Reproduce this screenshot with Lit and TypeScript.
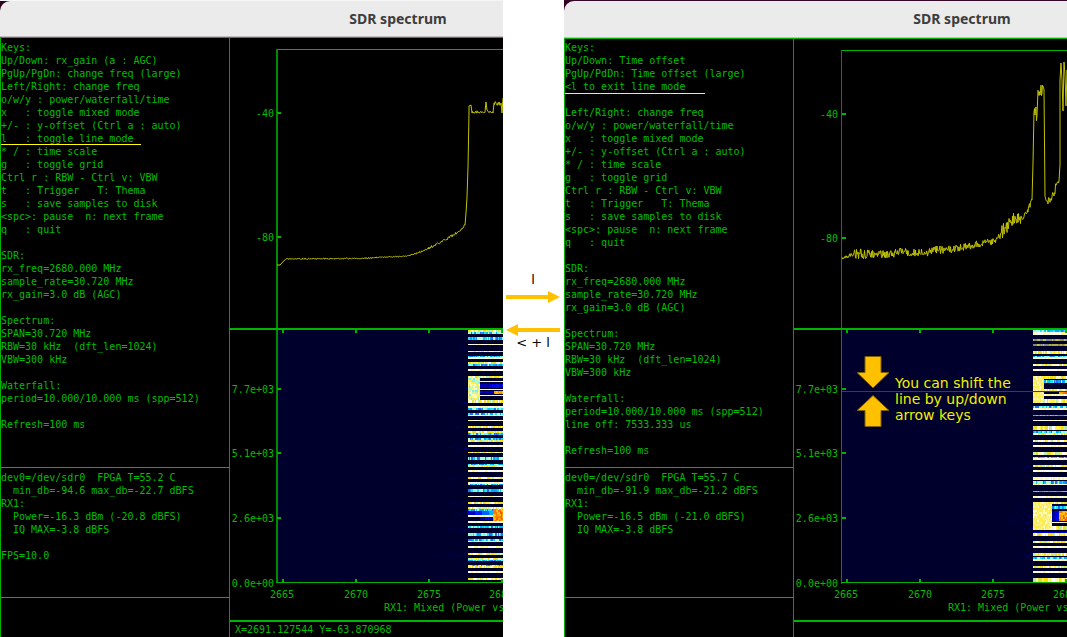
import { LitElement, html, svg, css, nothing } from "lit";
import { classMap } from "lit/directives/class-map.js";

type Tone = "white" | "yellow" | "cyan" | "dull" | "block" | "mixed" | "orange" | "blue" | "fade";
// x start, y, width, height, tone
type Band = [number, number, number, number, Tone];

interface Capture {
  lowered: boolean;
  keys: string[];
  marked: string;
  status: string[];
  cursor: string;
  frameX: number;
  trace: string;
  bands: Band[];
  haze: [number, number][];
  lineMode: boolean;
}

const PALETTE: Record<Tone, string[]> = {
  white: ["#ffffff", "#fff9b0", "#ffffe8", "#f4f4f4", "#fdf68a"],
  yellow: ["#fff04a", "#fff9b0", "#e9dc30", "#ffffff", "#b9f0b0", "#ffe000"],
  cyan: ["#20e0ff", "#00a8ff", "#70ffe8", "#2070ff", "#a8ffd0", "#00d0f0"],
  dull: ["#8c8c50", "#b8a848", "#7c8890", "#c8b850"],
  block: ["#fff37a", "#ffee40", "#fffbc0", "#f4f090", "#ffe850"],
  mixed: ["#fff37a", "#ffee40", "#fffbc0", "#b8f8c0", "#80f0e8", "#f0f080"],
  orange: ["#ffa000", "#ffc000", "#ff7800", "#ffb820", "#f06000"],
  blue: ["#0000c8", "#0010e0", "#0000a0", "#0000e8"],
  fade: ["#0000c0", "#0018ff", "#0060ff", "#00b0ff"],
};

function noise(seed: number) {
  let s = seed;
  return () => {
    s = (s * 1664525 + 1013904223) % 4294967296;
    return s / 4294967296;
  };
}

function paintBand([x, y, w, h, tone]: Band, rand: () => number) {
  const colours = PALETTE[tone];
  const cells = [];
  const tall = tone === "block" || tone === "mixed" || tone === "orange" ? 2 : h;
  for (let cy = 0; cy < h; cy += tall) {
    for (let cx = 0; cx < w; ) {
      const cw = Math.min(w - cx, rand() < 0.5 ? 1 : 2);
      const index =
        tone === "fade"
          ? Math.min(3, Math.floor((cx / w) * 4))
          : Math.floor(rand() * colours.length);
      cells.push(
        svg`<rect x=${x + cx} y=${y + cy} width=${cw} height=${Math.min(tall, h - cy)} fill=${colours[index]} />`
      );
      cx += cw;
    }
  }
  return cells;
}

function roughen(points: [number, number, number][], seed: number): string {
  const rand = noise(seed);
  const out: string[] = [];
  for (let i = 0; i < points.length - 1; i++) {
    const [x0, y0, a0] = points[i];
    const [x1, y1] = points[i + 1];
    const steps = a0 ? Math.max(1, Math.round((x1 - x0) / 0.5)) : 1;
    for (let k = 0; k < steps; k++) {
      const t = k / steps;
      const dy = a0 ? (rand() - 0.5) * 2 * a0 : 0;
      out.push(`${(x0 + (x1 - x0) * t).toFixed(1)},${(y0 + (y1 - y0) * t + dy).toFixed(1)}`);
    }
  }
  const last = points[points.length - 1];
  out.push(`${last[0]},${last[1]}`);
  return out.join(" ");
}

const SIGNAL_WIDTH = 40;

const full = (x: number, rows: [number, number, Tone][]): Band[] =>
  rows.map(([y, h, tone]): Band => [x, y, SIGNAL_WIDTH, h, tone]);

const TAIL_KEYS = [
  "* / : time scale",
  "g   : toggle grid",
  "Ctrl r : RBW - Ctrl v: VBW",
  "t   : Trigger   T: Thema",
  "s   : save samples to disk",
  "<spc>: pause  n: next frame",
  "q   : quit",
  "",
  "SDR:",
  "rx_freq=2680.000 MHz",
  "sample_rate=30.720 MHz",
  "rx_gain=3.0 dB (AGC)",
  "",
  "Spectrum:",
  "SPAN=30.720 MHz",
  "RBW=30 kHz  (dft_len=1024)",
  "VBW=300 kHz",
  "",
  "Waterfall:",
  "period=10.000/10.000 ms (spp=512)",
];

const NORMAL: Capture = {
  lowered: false,
  marked: "l   : toggle line mode",
  keys: [
    "Keys:",
    "Up/Down: rx_gain (a : AGC)",
    "PgUp/PgDn: change freq (large)",
    "Left/Right: change freq",
    "o/w/y : power/waterfall/time",
    "x   : toggle mixed mode",
    "+/- : y-offset (Ctrl a : auto)",
    "l   : toggle line mode",
    ...TAIL_KEYS,
    "",
    "Refresh=100 ms",
  ],
  status: [
    "dev0=/dev/sdr0  FPGA T=55.2 C",
    "  min_db=-94.6 max_db=-22.7 dBFS",
    "RX1:",
    "  Power=-16.3 dBm (-20.8 dBFS)",
    "  IQ MAX=-3.8 dBFS",
    "",
    "FPS=10.0",
  ],
  cursor: "X=2691.127544 Y=-63.870968",
  frameX: 276,
  trace: roughen(
    [
      [277, 265, 0], [280, 265, 0], [286, 259, 0.6], [360, 258.5, 0.6], [378, 257.5, 0.5],
      [407, 256, 0.5], [416, 253.5, 0.8], [427, 249, 1.2], [443, 241, 1.2], [460, 231, 1],
      [465, 225, 0], [466, 213, 0], [467, 197, 0], [468, 167, 0], [469, 113, 0], [469, 106, 0],
      [471, 105, 0], [472, 112, 1.3], [485, 112, 0], [486, 102, 0], [487, 110, 0],
      [489, 112, 1.2], [493, 113, 0], [494, 103, 2.5], [501, 103, 0], [502, 113, 0], [503, 98, 0],
    ],
    11
  ),
  bands: [
    ...full(468, [
      [330, 2, "yellow"], [332, 2, "cyan"], [337, 3, "cyan"], [344, 1, "white"], [351, 1, "yellow"],
      [356, 1, "cyan"], [357, 2, "white"], [362, 2, "yellow"], [364, 2, "cyan"], [369, 2, "white"],
      [376, 2, "yellow"], [381, 1, "white"], [389, 1, "white"], [395, 1, "white"], [400, 3, "yellow"],
      [406, 2, "white"], [408, 2, "cyan"], [413, 2, "cyan"], [415, 1, "white"], [420, 1, "white"],
      [426, 2, "yellow"], [431, 2, "yellow"], [433, 2, "cyan"], [438, 2, "cyan"], [440, 2, "yellow"],
      [445, 2, "white"], [452, 1, "yellow"], [457, 3, "cyan"], [464, 1, "cyan"], [465, 2, "yellow"],
      [470, 2, "white"], [477, 2, "yellow"], [482, 2, "white"], [484, 1, "cyan"], [489, 3, "cyan"],
      [496, 1, "white"], [502, 2, "yellow"], [507, 2, "yellow"], [509, 2, "cyan"], [515, 2, "white"],
      [521, 2, "white"], [526, 2, "cyan"], [533, 3, "cyan"], [539, 2, "cyan"], [541, 1, "yellow"],
      [546, 2, "white"], [553, 2, "yellow"], [558, 2, "yellow"], [560, 1, "cyan"], [565, 1, "cyan"],
      [566, 2, "yellow"], [571, 2, "white"], [578, 2, "yellow"],
    ]),
    [468, 378, 12, 22, "mixed"], [480, 384, 28, 4, "blue"],
    [480, 391, 14, 2, "blue"], [494, 391, 40, 3, "orange"],
    [467, 511, 27, 4, "fade"], [480, 517, 14, 3, "blue"], [493, 510, 40, 11, "orange"],
  ],
  haze: [[346, 8], [362, 14], [376, 12], [388, 20], [400, 30], [426, 20], [446, 28], [478, 26], [502, 30], [512, 22], [528, 34], [554, 40]],
  lineMode: false,
};

const LINE: Capture = {
  lowered: true,
  marked: "<l to exit line mode",
  keys: [
    "Keys:",
    "Up/Down: Time offset",
    "PgUp/PdDn: Time offset (large)",
    "<l to exit line mode",
    "",
    "Left/Right: change freq",
    "o/w/y : power/waterfall/time",
    "x   : toggle mixed mode",
    "+/- : y-offset (Ctrl a : auto)",
    ...TAIL_KEYS,
    "line off: 7533.333 us",
    "",
    "Refresh=100 ms",
  ],
  status: [
    "dev0=/dev/sdr0  FPGA T=55.7 C",
    "  min_db=-91.9 max_db=-21.2 dBFS",
    "RX1:",
    "  Power=-16.5 dBm (-21.0 dBFS)",
    "  IQ MAX=-3.8 dBFS",
  ],
  cursor: "",
  frameX: 277,
  trace: roughen(
    [
      [278, 258, 1.5], [285, 256, 2], [290, 254, 5], [304, 254, 4], [325, 254, 4.5], [340, 252, 4],
      [359, 253, 5], [372, 250, 4], [389, 249, 3.5], [410, 245, 3.5], [433, 241, 4], [438, 232, 7],
      [447, 222, 7], [452, 218, 5], [458, 219, 3], [463, 213, 3], [468, 200, 0], [469, 163, 0],
      [470, 104, 8], [473, 115, 0], [474, 90, 6], [480, 90, 0], [481, 198, 2], [484, 201, 4],
      [490, 195, 5], [492, 185, 2], [495, 181, 0], [496, 165, 0], [496, 80, 0], [497, 63, 0],
      [498, 80, 0], [499, 111, 0], [500, 62, 0], [501, 75, 0], [502, 106, 0], [503, 70, 0], [505, 90, 0],
    ],
    29
  ),
  bands: [
    ...full(469, [
      [330, 2, "cyan"], [332, 3, "white"], [339, 2, "dull"], [344, 2, "dull"], [351, 3, "yellow"],
      [356, 1, "cyan"], [357, 2, "white"], [364, 2, "yellow"], [369, 2, "white"], [376, 3, "yellow"],
      [380, 3, "cyan"], [389, 2, "yellow"], [394, 2, "white"], [399, 4, "yellow"], [406, 2, "cyan"],
      [408, 2, "white"], [415, 1, "dull"], [420, 1, "white"], [426, 4, "yellow"], [431, 2, "cyan"],
      [433, 2, "yellow"], [440, 2, "yellow"], [445, 2, "white"], [452, 3, "yellow"], [457, 1, "cyan"],
      [458, 2, "white"], [465, 2, "yellow"], [470, 2, "white"], [477, 3, "white"], [481, 3, "cyan"],
      [484, 1, "white"], [491, 1, "dull"], [496, 2, "white"], [502, 2, "yellow"], [506, 3, "cyan"],
      [522, 1, "white"], [526, 4, "yellow"], [532, 1, "blue"], [533, 3, "yellow"], [541, 2, "yellow"],
      [546, 2, "white"], [553, 3, "yellow"], [557, 2, "cyan"], [559, 2, "white"], [566, 2, "yellow"],
      [571, 2, "white"], [578, 4, "yellow"],
    ]),
    [469, 376, 11, 27, "block"], [495, 392, 40, 2, "orange"],
    [469, 502, 19, 28, "block"], [488, 511, 7, 10, "blue"], [495, 511, 40, 10, "orange"],
  ],
  haze: [[351, 10], [378, 12], [400, 14], [428, 14], [440, 20], [466, 24], [510, 24], [516, 30], [520, 28], [528, 16], [554, 14]],
  lineMode: true,
};

class SdrPlot extends LitElement {
  static properties = { capture: { attribute: false } };
  declare capture: Capture;

  static styles = css`
    :host { display: block; overflow: hidden; }
    .canvas { display: block; width: 100%; height: 100%; }
    text { font: 10px "DejaVu Sans Mono", monospace; fill: #00be00; white-space: pre; }
    .end { text-anchor: end; }
    .middle { text-anchor: middle; }
    .rule { fill: #00b400; }
    .side { fill: #008a00; }
    .floor { fill: #00002c; }
    .haze { fill: #000068; }
    .trace { fill: none; stroke: #c4c400; stroke-width: 1px; }
    .cut { fill: #a01414; }
    .arrow { fill: #ffc000; stroke: #7f6000; stroke-width: 1px; }
    text.hint { font: 14px "DejaVu Sans", sans-serif; fill: #f0f000; }
  `;

  render() {
    const c = this.capture;
    const drop = c.lowered ? 1 : 0;
    const rand = noise(c.lowered ? 7 : 3);
    const fx = c.frameX;
    return html`
      <svg class="canvas" role="img" aria-label="Power spectrum and waterfall">
        <g transform="translate(-230 ${-38 - drop})">
          <g shape-rendering="crispEdges">
            <rect class="rule" x=${fx} y=${49 + drop} width="900" height="1" />
            <rect class="floor" x=${fx + 1} y="330" width="900" height="253" />
            ${c.haze.map(
              ([y, w]) => svg`${Array.from({ length: Math.floor(w / 4) }, (_, i) => svg`
                <rect class="haze" x=${468 - i * 4 - Math.floor(rand() * 3)} y=${y + Math.floor(rand() * 3)}
                  width=${i < 2 ? 3 : 2} height="1" opacity=${(1 - (i * 4) / (w + 6)).toFixed(2)} />`)}`
            )}
            ${c.bands.map((b) => paintBand(b, rand))}
            <rect class="side" x=${fx} y=${49 + drop} width=${drop ? 1 : 2} height="534" />
            <rect class="rule" x="230" y="328" width="900" height="2" />
            <rect class="rule" x=${fx} y="582" width="900" height="1" />
            <rect class="rule" x="230" y="620" width="900" height="2" />
            ${[282, 355, 428, 501].map((x) => svg`
              <rect class="rule" x=${x} y="330" width="2" height="3" />
              <rect class="rule" x=${x} y="579" width="2" height="4" />`)}
            ${[113 + drop, 237 + drop, 389, 453, 518].map(
              (y) => svg`<rect class="rule" x=${fx + 1} y=${y - 1} width="4" height="2" />`
            )}
          </g>
          <text class="end" x="274" y=${117 + drop}>-40</text>
          <text class="end" x="274" y=${241 + drop}>-80</text>
          <text class="end" x="274" y="393">7.7e+03</text>
          <text class="end" x="274" y="457">5.1e+03</text>
          <text class="end" x="274" y="522">2.6e+03</text>
          <text class="end" x="274" y="587">0.0e+00</text>
          <text class="middle" x="282" y="598">2665</text>
          <text class="middle" x="356" y="598">2670</text>
          <text class="middle" x="429" y="598">2675</text>
          <text class="middle" x="501" y="598">2680</text>
          <text x="384" y="611">RX1: Mixed (Power vs</text>
          <text x="235" y="633">${c.cursor}</text>
          <polyline class="trace" points=${c.trace} />
          ${c.lineMode
            ? svg`
              <rect class="cut" x="278" y="391" width="900" height="1" />
              <polygon class="arrow" points="301,356.5 317,356.5 317,372.5 325,372.5 309,388 293,372.5 301,372.5" />
              <polygon class="arrow" points="301,426.5 317,426.5 317,410.5 325,410.5 309,395.5 293,410.5 301,410.5" />
              <text class="hint" x="331" y="388">You can shift the</text>
              <text class="hint" x="331" y="404">line by up/down</text>
              <text class="hint" x="331" y="420">arrow keys</text>`
            : nothing}
        </g>
      </svg>
    `;
  }
}
customElements.define("sdr-plot", SdrPlot);

class SdrWindow extends LitElement {
  static properties = { capture: { attribute: false } };
  declare capture: Capture;

  static styles = css`
    :host { display: block; min-width: 0; overflow: hidden; background: #000; }
    .window { display: grid; grid-template-rows: 37px 1fr; height: 100%; }
    .lowered { grid-template-rows: 38px 1fr; }
    .frame { background: #2c001e; border-top: 1px solid #f6f6f6; box-sizing: border-box; }
    .lowered .frame { border-top-color: #35082a; }
    .title {
      box-sizing: border-box; height: 100%; margin: 0; overflow: hidden;
      display: flex; align-items: center;
      background: #ebebeb; border-radius: 10px 0 0 0; border-bottom: 1px solid #c4bcc0;
      font: 700 14px/20px "Noto Sans", sans-serif; color: #3d3d3d;
    }
    .caption { flex: none; width: 796px; text-align: center; }
    .body {
      display: grid; grid-template-columns: 230px minmax(0, 1fr);
      border-top: 1px solid #00b400;
    }
    .side {
      box-sizing: border-box; display: grid; grid-template-rows: 1fr 130px 39px;
      border-left: 1px solid #00b400; border-right: 1px solid #00a000;
      font: 10px/13px "DejaVu Sans Mono", monospace; color: #00be00;
    }
    .panel { border-bottom: 1px solid #00b400; padding-top: 3px; overflow: hidden; box-sizing: border-box; }
    .lowered .panel:first-child { padding-top: 2px; }
    .row { height: 13px; white-space: pre; }
    .marked { width: 140px; box-shadow: inset 0 -1px #ffff00; }
    .lowered .marked { box-shadow: 0 1px #ffff00; }
  `;

  render() {
    const c = this.capture;
    const row = (line: string) =>
      html`<div class=${classMap({ row: true, marked: line === c.marked })}>${line}</div>`;
    return html`
      <section class=${classMap({ window: true, lowered: c.lowered })}>
        <header class="frame"><h2 class="title"><span class="caption">SDR spectrum</span></h2></header>
        <div class="body">
          <div class="side">
            <div class="panel">${c.keys.map(row)}</div>
            <div class="panel">${c.status.map(row)}</div>
          </div>
          <sdr-plot .capture=${c}></sdr-plot>
        </div>
      </section>
    `;
  }
}
customElements.define("sdr-window", SdrWindow);

class AppRoot extends LitElement {
  static styles = css`
    :host { display: block; background: #fff; }
    .page {
      display: grid; grid-template-columns: minmax(0, 1fr) 61px minmax(0, 1fr);
      min-height: 100vh; overflow: hidden;
    }
    .between {
      display: flex; flex-direction: column; align-items: center;
      padding: 273px 4px 0 3px; box-sizing: border-box;
      font: 13px/14px "DejaVu Sans", sans-serif; color: #000;
    }
    .arrow { display: block; width: 54px; height: 12px; fill: #ffc000; }
    .go { margin: 4px 0 21px; }
  `;

  render() {
    return html`
      <main class="page">
        <sdr-window .capture=${NORMAL}></sdr-window>
        <div class="between">
          <span>l</span>
          <svg class="arrow go" viewBox="0 0 54 12"><path d="M0 4H42V0L54 6L42 12V8H0Z" /></svg>
          <svg class="arrow" viewBox="0 0 54 12"><path d="M54 4H12V0L0 6L12 12V8H54Z" /></svg>
          <span>&lt; + l</span>
        </div>
        <sdr-window .capture=${LINE}></sdr-window>
      </main>
    `;
  }
}
customElements.define("app-root", AppRoot);
